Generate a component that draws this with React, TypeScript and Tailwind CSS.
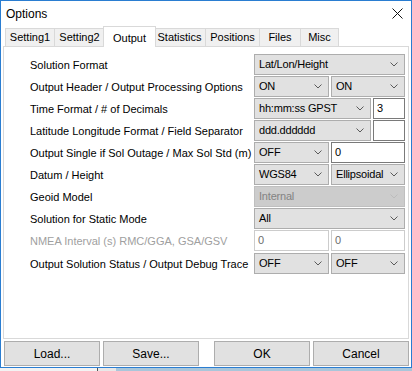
import React from "react";

const font = { fontFamily: '"Liberation Sans", Arial, sans-serif' };

function Chevron({ disabled }: { disabled?: boolean }) {
  return (
    <svg width="8" height="5" viewBox="0 0 8 5" className="shrink-0">
      <polyline
        points="0.5,0.5 4,4 7.5,0.5"
        fill="none"
        stroke={disabled ? "#bcbcbc" : "#5a5a5a"}
        strokeWidth="1"
      />
    </svg>
  );
}

function Combo({ value, className = "", disabled }: { value: string; className?: string; disabled?: boolean }) {
  return (
    <div
      className={
        "h-[21px] flex items-center justify-between pl-[4px] pr-[6px] border " +
        (disabled
          ? "bg-[#cccccc] border-[#bfbfbf] text-[#838383] "
          : "bg-[#e1e1e1] border-[#adadad] text-black ") +
        className
      }
    >
      <span className="tracking-[-0.2px]">{value}</span>
      <Chevron disabled={disabled} />
    </div>
  );
}

function Input({ value, className = "" }: { value: string; className?: string }) {
  return (
    <div className={"h-[21px] flex items-center pl-[3px] bg-white border border-[#7a7a7a] " + className}>
      {value}
    </div>
  );
}

const tabs = ["Setting1", "Setting2", "Output", "Statistics", "Positions", "Files", "Misc"];
const tabWidths = ["w-[50px]", "w-[51px]", "w-[49px]", "w-[53px]", "w-[55px]", "w-[42px]", "w-[39px]"];

export default function App() {
  return (
    <div className="w-[412px] h-[371px] bg-[#a9c6da] text-[11px]" style={font}>
      <div className="w-[412px] h-[368px] bg-white border border-[#2a7dd1] flex flex-col">
        {/* Title bar */}
        <div className="h-[25px] flex items-center justify-between pl-[5px] pr-[8px]">
          <span className="text-[12px] text-black">Options</span>
          <svg width="11" height="11" viewBox="0 0 11 11">
            <path d="M0.5 0.5 L10.5 10.5 M10.5 0.5 L0.5 10.5" stroke="#111" strokeWidth="1" />
          </svg>
        </div>

        {/* Tabs */}
        <div className="h-[20px] flex items-end pl-[4px] relative z-10">
          {tabs.map((t, i) =>
            t === "Output" ? (
              <div
                key={t}
                className="h-[21px] -mb-[1px] -mx-[2px] w-[53px] bg-white border border-[#d9d9d9] border-b-0 flex items-start justify-center pt-[3px] text-black z-10"
              >
                {t}
              </div>
            ) : (
              <div
                key={t}
                className={
                  "h-[18px] bg-[#f0f0f0] border border-[#d9d9d9] border-b-0 -ml-[1px] first:ml-0 flex items-center justify-center text-black " +
                  tabWidths[i]
                }
              >
                {t}
              </div>
            )
          )}
        </div>

        {/* Panel */}
        <div className="mx-[2px] h-[293px] border border-[#d9d9d9] bg-white pl-[26px] pr-[4px] pt-[7px]">
          <div className="grid grid-cols-[224px_151px] auto-rows-[22px] text-black">
            <div className="flex items-center pt-[1px]">Solution Format</div>
            <Combo value="Lat/Lon/Height" />

            <div className="flex items-center pt-[1px]">Output Header / Output Processing Options</div>
            <div className="flex gap-[2px]">
              <Combo value="ON" className="w-[75px]" />
              <Combo value="ON" className="flex-1" />
            </div>

            <div className="flex items-center pt-[1px]">Time Format / # of Decimals</div>
            <div className="flex gap-[2px]">
              <Combo value="hh:mm:ss GPST" className="w-[117px]" />
              <Input value="3" className="flex-1" />
            </div>

            <div className="flex items-center pt-[1px]">Latitude Longitude Format / Field Separator</div>
            <div className="flex gap-[2px]">
              <Combo value="ddd.dddddd" className="w-[117px]" />
              <Input value="" className="flex-1" />
            </div>

            <div className="flex items-center pt-[1px]">Output Single if Sol Outage / Max Sol Std (m)</div>
            <div className="flex gap-[2px]">
              <Combo value="OFF" className="w-[75px]" />
              <Input value="0" className="flex-1" />
            </div>

            <div className="flex items-center pt-[1px]">Datum / Height</div>
            <div className="flex gap-[2px]">
              <Combo value="WGS84" className="w-[75px]" />
              <Combo value="Ellipsoidal" className="flex-1" />
            </div>

            <div className="flex items-center pt-[1px]">Geoid Model</div>
            <Combo value="Internal" disabled />

            <div className="flex items-center pt-[1px]">Solution for Static Mode</div>
            <Combo value="All" />

            <div className="flex items-center pt-[1px] text-[#a0a0a0]">NMEA Interval (s) RMC/GGA, GSA/GSV</div>
            <div className="flex gap-[2px]">
              <Input value="0" className="w-[75px] border-[#cccccc] text-[#6d6d6d]" />
              <Input value="0" className="flex-1 border-[#cccccc] text-[#6d6d6d]" />
            </div>

            <div className="flex items-center pt-[3px]">Output Solution Status / Output Debug Trace</div>
            <div className="flex gap-[2px] pt-[1px]">
              <Combo value="OFF" className="w-[75px]" />
              <Combo value="OFF" className="flex-1" />
            </div>
          </div>
        </div>

        {/* Buttons */}
        <div className="flex pl-[3px] pt-[2px] text-[12px] text-black">
          <div className="w-[96px] h-[25px] bg-[#e1e1e1] border border-[#adadad] flex items-center justify-center">Load...</div>
          <div className="w-[96px] h-[25px] ml-[3px] bg-[#e1e1e1] border border-[#adadad] flex items-center justify-center">Save...</div>
          <div className="w-[96px] h-[25px] ml-[15px] bg-[#e1e1e1] border border-[#adadad] flex items-center justify-center">OK</div>
          <div className="w-[96px] h-[25px] ml-[3px] bg-[#e1e1e1] border border-[#adadad] flex items-center justify-center">Cancel</div>
        </div>
      </div>
      <div className="h-[3px] flex">
        <div className="w-[97px] bg-[#f3f3f3]" />
        <div className="w-[1px] bg-[#555]" />
        <div className="w-[18px] bg-[#e8e8e8]" />
      </div>
    </div>
  );
}
